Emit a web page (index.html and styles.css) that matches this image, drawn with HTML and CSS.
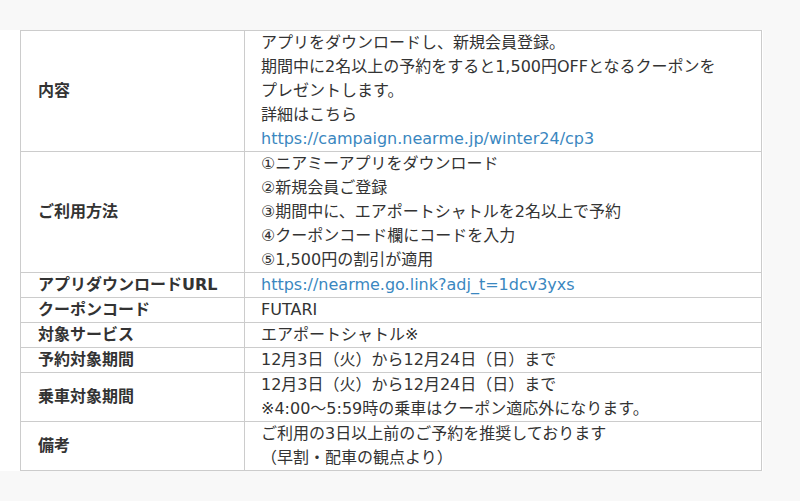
FILE: index.html
```html
<!DOCTYPE html>
<html lang="ja">
<head>
    <meta charset="UTF-8">
    <title>キャンペーン概要</title>
    <link rel="stylesheet" href="styles.css">
</head>
<body>
    <div class="panel">
        <table class="campaign">
            <tr>
                <th>内容</th>
                <td>アプリをダウンロードし、新規会員登録。<br>期間中に2名以上の予約をすると1,500円OFFとなるクーポンを<br>プレゼントします。<br>詳細はこちら<br><a href="#">https://campaign.nearme.jp/winter24/cp3</a></td>
            </tr>
            <tr>
                <th>ご利用方法</th>
                <td>①ニアミーアプリをダウンロード<br>②新規会員ご登録<br>③期間中に、エアポートシャトルを2名以上で予約<br>④クーポンコード欄にコードを入力<br>⑤1,500円の割引が適用</td>
            </tr>
            <tr>
                <th>アプリダウンロードURL</th>
                <td><a href="#">https://nearme.go.link?adj_t=1dcv3yxs</a></td>
            </tr>
            <tr>
                <th>クーポンコード</th>
                <td>FUTARI</td>
            </tr>
            <tr>
                <th>対象サービス</th>
                <td>エアポートシャトル※</td>
            </tr>
            <tr>
                <th>予約対象期間</th>
                <td>12月3日（火）から12月24日（日）まで</td>
            </tr>
            <tr>
                <th>乗車対象期間</th>
                <td>12月3日（火）から12月24日（日）まで<br>※4:00～5:59時の乗車はクーポン適応外になります。</td>
            </tr>
            <tr>
                <th>備考</th>
                <td>ご利用の3日以上前のご予約を推奨しております<br>（早割・配車の観点より）</td>
            </tr>
        </table>
    </div>
</body>
</html>
```

FILE: styles.css
```css
body{margin:0;background:#f8f8f8;font-family:"DejaVu Sans","Noto Sans CJK JP",sans-serif;color:#333;}
.panel{margin-top:30px;width:743px;padding-left:20px;background:#fff;}
.campaign{width:742px;border-collapse:collapse;font-size:16px;line-height:24px;}
.campaign th,.campaign td{border:1px solid #ccc;padding:0 16px;vertical-align:middle;text-align:left;}
.campaign th{width:190px;font-weight:bold;padding-left:17px;}
.campaign a{color:#3a87c0;text-decoration:none;}
```
